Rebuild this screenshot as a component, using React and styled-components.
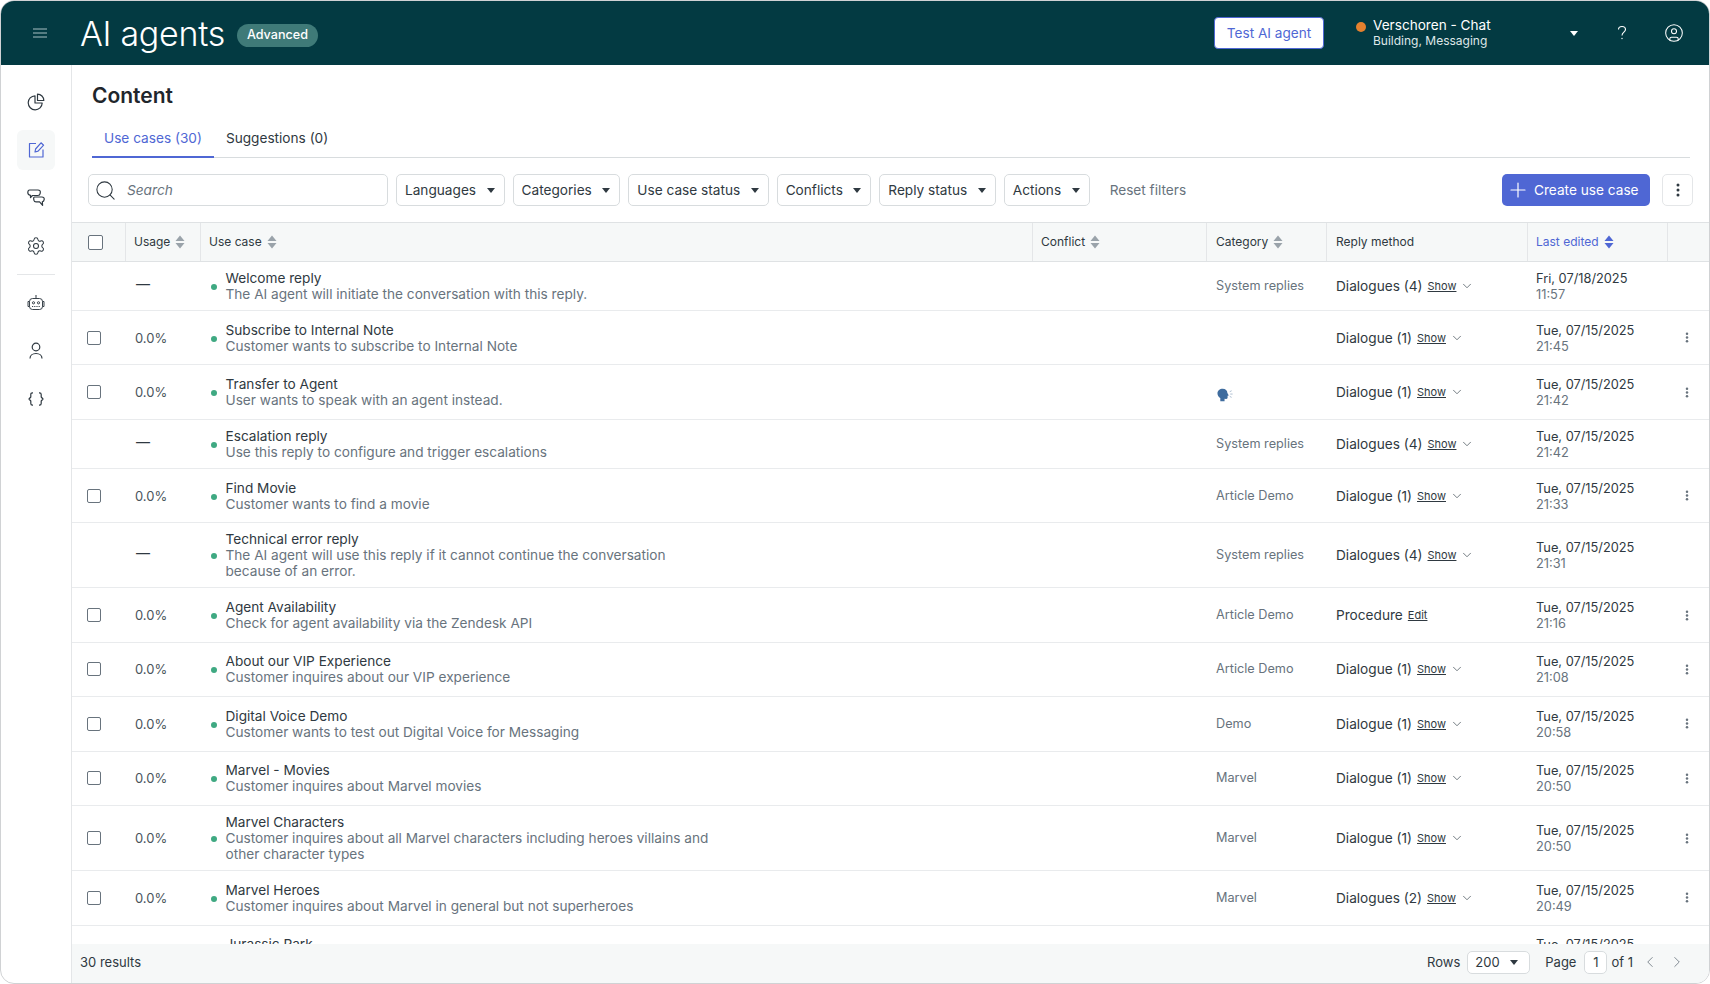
import React from 'react';
import styled, { createGlobalStyle } from 'styled-components';
import { Settings, ChevronDown, ChevronLeft, ChevronRight, Plus, Search as SearchGlyph, CircleUser } from 'lucide-react';

const Global = createGlobalStyle`
  html, body { margin: 0; padding: 0; background: #fff; }
  * { box-sizing: border-box; }
  body { font-family: Inter, "Liberation Sans", sans-serif; font-size: 13.65px; line-height: 16px; color: #2f3941; overflow: hidden; }
`;

const COLUMNS = '54px 75px 832px 174px 120px 201px 140px 1fr';

const Frame = styled.div`
  width: 1710px; height: 984px; border: 1px solid #d0d2d4; border-radius: 14px; overflow: hidden;
  display: flex; flex-direction: column; background: #fff;
`;
const TopBar = styled.header`
  height: 64px; flex: none; background: #033a42; color: #fff; display: flex; align-items: center; padding: 0 25px 0 32px;
`;
const MenuButton = styled.span`display: flex; color: #a9bfc2; margin-right: 33px;`;
const AppTitle = styled.h1`margin: 2px 0 0; font-size: 34px; line-height: 40px; font-weight: 300; letter-spacing: -0.3px;`;
const Badge = styled.span`
  margin: 4px 0 0 12px; height: 23px; padding: 0 10px; border-radius: 12px; background: #3f7a78; color: #fff;
  font-size: 12.6px; font-weight: 500; display: flex; align-items: center;
`;
const TestButton = styled.button`
  margin-left: auto; width: 110px; height: 32px; border-radius: 4px; border: 1px solid #4f67d4; background: #fff; color: #4f67d4;
  font: 400 13.6px Inter, sans-serif;
`;
const Status = styled.div`display: flex; align-items: center; margin-left: 32px; width: 222px;`;
const StatusDot = styled.span`width: 10px; height: 10px; border-radius: 50%; background: #e5812f; margin: -13px 7px 0 0;`;
const StatusText = styled.div`margin-top: -2px;`;
const StatusName = styled.div`font-size: 13.6px; line-height: 16px;`;
const StatusSub = styled.div`font-size: 12px; line-height: 15px; color: #dfe7e8;`;
const HeaderCaret = styled.span`
  width: 0; height: 0; border-left: 4.5px solid transparent; border-right: 4.5px solid transparent; border-top: 5px solid #fff; margin-left: auto;
`;
const HeaderIcon = styled.span`display: flex; margin-left: ${p => p.$gap}px; color: #fff;`;

const Body = styled.div`flex: 1; min-height: 0; display: flex;`;
const Sidebar = styled.nav`
  width: 71px; flex: none; border-right: 1px solid #e4e6e8; padding-top: 17px; display: flex; flex-direction: column; align-items: center;
`;
const NavItem = styled.span`
  width: 38px; height: 40px; margin-bottom: 8px; border-radius: 6px; display: flex; align-items: center; justify-content: center;
  color: ${p => p.$active ? '#4f67d4' : '#2f3941'}; background: ${p => p.$active ? '#f6f8f8' : 'transparent'};
`;
const NavDivider = styled.div`width: 38px; height: 1px; background: #e4e6e8; margin: 0 0 8px;`;
const Main = styled.main`flex: 1; min-width: 0; display: flex; flex-direction: column;`;
const PageHead = styled.div`padding: 17px 19px 0 20px; flex: none;`;
const PageTitle = styled.h2`margin: 0; font-size: 21px; line-height: 28px; font-weight: 600; color: #1f262c;`;
const Tabs = styled.div`display: flex; margin-top: 7px; border-bottom: 1px solid #d8dcde; height: 41px;`;
const Tab = styled.div`
  height: 40px; padding: 2px 12px 0; display: flex; align-items: center;
  color: ${p => p.$active ? '#4f67d4' : '#2f3941'}; box-shadow: ${p => p.$active ? '0 1px 0 #4f67d4, inset 0 -1px 0 #4f67d4' : 'none'};
`;
const Toolbar = styled.div`display: flex; gap: 8px; align-items: center; padding: 0 16px; margin: 16px 0; flex: none;`;
const SearchBox = styled.div`
  width: 300px; height: 32px; border: 1px solid #d8dcde; border-radius: 5px; display: flex; align-items: center; padding: 0 5px; gap: 10px;
  color: #2f3941;
`;
const SearchText = styled.span`font-style: italic; color: #68737d;`;
const Filter = styled.div`
  height: 32px; border: 1px solid #d8dcde; border-radius: 5px; padding: 0 9px 0 8px; display: flex; align-items: center; gap: 10.5px; color: #2f3941;
`;
const Caret = styled.span`
  width: 0; height: 0; border-left: 4.5px solid transparent; border-right: 4.5px solid transparent; border-top: 5px solid #2f3941;
`;
const Reset = styled.span`margin-left: 12px; color: #68737d;`;
const CreateButton = styled.div`
  margin-left: auto; width: 148px; height: 32px; border-radius: 5px; background: #4f67d4; color: #fff; display: flex; align-items: center; padding-left: 4px; gap: 4px;
`;
const KebabButton = styled.div`
  width: 31px; height: 32px; margin-left: 4px; border: 1px solid #e4e6e8; border-radius: 5px; display: flex; align-items: center; justify-content: center;
`;
const TableArea = styled.div`flex: 1; min-height: 0; overflow: hidden;`;
const HeadRow = styled.div`
  display: grid; grid-template-columns: ${COLUMNS}; height: 40px; background: #f6f8f8; border-top: 1px solid #dfe2e4; border-bottom: 1px solid #dfe2e4;
`;
const HeadCell = styled.div`
  display: flex; align-items: center; gap: 5px; padding-left: ${p => p.$pad}px; border-right: ${p => p.$last ? '0' : '1px solid #e4e6e8'};
  font-size: 12px; color: ${p => p.$active ? '#4f67d4' : '#2f3941'};
`;
const Row = styled.div`
  display: grid; grid-template-columns: ${COLUMNS}; align-items: center; padding: 8px 0; border-bottom: 1px solid #e9ebed;
`;
const CheckCell = styled.div`padding-left: 14.5px; display: flex; align-items: center; ${p => p.$show ? 'height: 37.45px;' : ''}`;
const Check = styled.span`
  display: block; width: ${p => p.$size}px; height: ${p => p.$size}px; border: 1.5px solid #68737d; border-radius: 2px; background: #fff;
`;
const UsageCell = styled.div`padding-left: 9px; font-size: 13px; color: #49545c;`;
const DashCell = styled.div`padding-left: 10px; margin-top: -4px; font-size: 14px; color: #2f3941;`;
const CaseCell = styled.div`display: flex; align-items: center; padding-left: 10px;`;
const LiveDot = styled.span`width: 6px; height: 6px; border-radius: 50%; background: #3fa982; flex: none; margin: 2px 8.5px 0 0;`;
const CaseText = styled.div`width: 486px;`;
const CaseTitle = styled.div`color: #2f3941;`;
const CaseDesc = styled.div`color: #68737d;`;
const Category = styled.div`padding-left: 9px; font-size: 12.7px; color: #68737d; grid-column: 5; display: flex; align-items: center;`;
const SpeakWrap = styled.span`display: flex; margin: 3px 0 -3px 1px;`;
const Reply = styled.div`padding-left: 9px; display: flex; align-items: center; grid-column: 6;`;
const ShowLink = styled.span`font-size: 11px; text-decoration: underline; margin-left: 5px; color: #2f3941;`;
const ChevronWrap = styled.span`display: flex; margin-left: 4px; color: #49545c;`;
const Edited = styled.div`margin: 1px 0 -1px; padding-left: 8px; grid-column: 7; font-size: 12.8px;`;
const EditedTime = styled.div`color: #68737d;`;
const RowKebab = styled.div`display: flex; padding-left: 16px; grid-column: 8;`;
const Footer = styled.footer`
  height: 39px; flex: none; background: #f6f8f8; display: flex; align-items: center; padding: 0 23px 3px 8px; color: #2f3941; font-size: 13px;
`;
const Rows = styled.span`margin-left: auto;`;
const RowSelect = styled.div`
  width: 63px; height: 23px; margin: 0 15px 0 7px; background: #fff; border: 1px solid #d8dcde; border-radius: 5px; display: flex; align-items: center; justify-content: space-between; padding: 0 11px 0 7px;
`;
const PageInput = styled.div`
  width: 23px; height: 23px; margin: 0 4px 0 8px; background: #fff; border: 1px solid #d8dcde; border-radius: 5px; display: flex; align-items: center; justify-content: center;
`;
const Pager = styled.span`display: flex; color: #68737d; margin-left: ${p => p.$gap}px;`;

const SortIcon = ({ active }) => (
  <svg width="10" height="14" viewBox="0 0 10 14" aria-hidden="true">
    <path d="M5 0.500 9.500 6h-9z" fill={active ? '#4f67d4' : '#9aa3aa'} />
    <path d="M5 13.500.5 8h9z" fill={active ? '#4f67d4' : '#9aa3aa'} />
  </svg>
);
const Dots = ({ size = 3, color = '#68737d', h = 14 }) => (
  <svg width="6" height={h} viewBox={`0 0 6 ${h}`} aria-hidden="true">
    <circle cx="3" cy={size / 2 + 0.5} r={size / 2} fill={color} />
    <circle cx="3" cy={h / 2} r={size / 2} fill={color} />
    <circle cx="3" cy={h - size / 2 - 0.5} r={size / 2} fill={color} />
  </svg>
);
const BurgerIcon = () => (
  <svg width="14" height="10" viewBox="0 0 14 10" stroke="currentColor" strokeWidth="1" aria-hidden="true">
    <path d="M0 1h14M0 5h14M0 9h14" />
  </svg>
);
const HelpGlyph = () => (
  <svg width="12" height="16" viewBox="0 0 12 16" fill="none" stroke="currentColor" strokeWidth="1.1" aria-hidden="true">
    <path d="M2.500 4.500C2.500 2.500 4 1.500 6 1.500s3.500 1.200 3.500 3c0 2.800-3.500 2.600-3.500 6" />
    <circle cx="6" cy="13.500" r="0.7" fill="currentColor" stroke="none" />
  </svg>
);
const PieIcon = () => (
  <svg width="18" height="18" viewBox="0 0 18 18" fill="none" stroke="currentColor" strokeWidth="1.2" strokeLinejoin="round" aria-hidden="true">
    <path d="M8 2.800a7 7 0 1 0 7.200 7.200H8z" />
    <path d="M10.500 1.200a6.300 6.300 0 0 1 6.300 6.300h-6.300z" />
  </svg>
);
const EditIcon = () => (
  <svg width="18" height="18" viewBox="0 0 18 18" fill="none" stroke="currentColor" strokeWidth="1.2" strokeLinejoin="round" aria-hidden="true">
    <path d="M9 2.500H2.500V16H16V8.500" />
    <path d="M8 11l.6-3 5.400-6.200 2.600 2.400-5.500 6z" />
  </svg>
);
const ChatsIcon = () => (
  <svg width="18" height="18" viewBox="0 0 18 18" fill="none" stroke="currentColor" strokeWidth="1.2" strokeLinejoin="round" aria-hidden="true">
    <path d="M2.500 1h8.500c1.600 0 2.500 1 2.300 2.400l-.2 1.300c-.2 1.200-1 1.800-2.100 1.800H5.500L3.500 8.500V6.400C1.800 6.100.7 5 .8 3.400.9 2 1.500 1 2.500 1z" />
    <path d="M7.500 8h7.500c1.400 0 2.400 1 2.200 2.400-.1 1.300-.9 2.200-1.900 2.400l.3 3.500-3-3.400H9c-1.100 0-1.900-.7-2.100-1.700l-.2-1.300C6.500 9 7 8 7.500 8z" />
  </svg>
);
const BotIcon = () => (
  <svg width="18" height="18" viewBox="0 0 18 18" fill="none" stroke="currentColor" strokeWidth="0.95" aria-hidden="true">
    <rect x="2.500" y="4.500" width="13" height="11" rx="3" />
    <path d="M9 4.500V2" />
    <circle cx="9" cy="1.600" r="0.7" fill="currentColor" stroke="none" />
    <path d="M2.500 7.500H1v5h1.500M15.500 7.500H17v5h-1.500" />
    <circle cx="6.500" cy="8.800" r="1.100" />
    <circle cx="11.500" cy="8.800" r="1.100" />
    <path d="M5 12.500h8" strokeDasharray="1.200 1" />
  </svg>
);
const PersonIcon = () => (
  <svg width="18" height="18" viewBox="0 0 18 18" fill="none" stroke="currentColor" strokeWidth="1.2" aria-hidden="true">
    <circle cx="9" cy="5" r="3.800" />
    <path d="M3 16.500c0-3 2.500-5 6-5s6 2 6 5" />
  </svg>
);
const BracesIcon = () => (
  <svg width="18" height="18" viewBox="0 0 18 18" fill="none" stroke="currentColor" strokeWidth="1.2" strokeLinejoin="round" aria-hidden="true">
    <path d="M6 2.800H5.500C4.300 2.800 3.800 3.500 3.800 4.500V7L2 9l1.800 2v2.500c0 1 .5 1.700 1.700 1.700H6" />
    <path d="M12 2.800h.5c1.200 0 1.700.7 1.700 1.700V7L16 9l-1.800 2v2.500c0 1-.5 1.700-1.700 1.700H12" />
  </svg>
);
const SpeakIcon = () => (
  <svg width="17" height="14" viewBox="0 0 18 14" aria-hidden="true">
    <path d="M6 0.500c3 0 5 2 5 4.500l1.500 2.500-1.300.4V10c0 .8-.7 1.300-1.500 1.200l-1.700-.1V13.500H3.500v-3.300C1.600 9 .5 7.200.5 5.300.5 2.600 3 .5 6 .5z" fill="#3f6c9e" />
    <path d="M13.500 3.500 15.500 2.500M14 6h2.500M13.500 8.500l2 1" stroke="#9fb4c9" strokeWidth="0.9" fill="none" />
  </svg>
);

const rows = [
  { t: 'Welcome reply', d: 'The AI agent will initiate the conversation with this reply.', c: 'System replies', r: 'Dialogues (4)', e: 'Fri, 07/18/2025', h: '11:57', sys: true },
  { t: 'Subscribe to Internal Note', d: 'Customer wants to subscribe to Internal Note', c: '', r: 'Dialogue (1)', e: 'Tue, 07/15/2025', h: '21:45' },
  { t: 'Transfer to Agent', d: 'User wants to speak with an agent instead.', speak: true, r: 'Dialogue (1)', e: 'Tue, 07/15/2025', h: '21:42' },
  { t: 'Escalation reply', d: 'Use this reply to configure and trigger escalations', c: 'System replies', r: 'Dialogues (4)', e: 'Tue, 07/15/2025', h: '21:42', sys: true },
  { t: 'Find Movie', d: 'Customer wants to find a movie', c: 'Article Demo', r: 'Dialogue (1)', e: 'Tue, 07/15/2025', h: '21:33' },
  { t: 'Technical error reply', d: 'The AI agent will use this reply if it cannot continue the conversation because of an error.', c: 'System replies', r: 'Dialogues (4)', e: 'Tue, 07/15/2025', h: '21:31', sys: true },
  { t: 'Agent Availability', d: 'Check for agent availability via the Zendesk API', c: 'Article Demo', r: 'Procedure', proc: true, e: 'Tue, 07/15/2025', h: '21:16' },
  { t: 'About our VIP Experience', d: 'Customer inquires about our VIP experience', c: 'Article Demo', r: 'Dialogue (1)', e: 'Tue, 07/15/2025', h: '21:08' },
  { t: 'Digital Voice Demo', d: 'Customer wants to test out Digital Voice for Messaging', c: 'Demo', r: 'Dialogue (1)', e: 'Tue, 07/15/2025', h: '20:58' },
  { t: 'Marvel - Movies', d: 'Customer inquires about Marvel movies', c: 'Marvel', r: 'Dialogue (1)', e: 'Tue, 07/15/2025', h: '20:50' },
  { t: 'Marvel Characters', d: 'Customer inquires about all Marvel characters including heroes villains and other character types', c: 'Marvel', r: 'Dialogue (1)', e: 'Tue, 07/15/2025', h: '20:50' },
  { t: 'Marvel Heroes', d: 'Customer inquires about Marvel in general but not superheroes', c: 'Marvel', r: 'Dialogues (2)', e: 'Tue, 07/15/2025', h: '20:49' },
  { t: 'Jurassic Park', d: 'Customer inquires about Jurassic Park', c: 'Marvel', r: 'Dialogue (1)', e: 'Tue, 07/15/2025', h: '20:47' },
];
const filters = ['Languages', 'Categories', 'Use case status', 'Conflicts', 'Reply status', 'Actions'];

export default function App() {
  return (
    <>
      <Global />
      <Frame>
        <TopBar>
          <MenuButton><BurgerIcon /></MenuButton>
          <AppTitle>AI agents</AppTitle>
          <Badge>Advanced</Badge>
          <TestButton>Test AI agent</TestButton>
          <Status>
            <StatusDot />
            <StatusText>
              <StatusName>Verschoren - Chat</StatusName>
              <StatusSub>Building, Messaging</StatusSub>
            </StatusText>
            <HeaderCaret />
          </Status>
          <HeaderIcon $gap={38}><HelpGlyph /></HeaderIcon>
          <HeaderIcon $gap={36}><CircleUser size={20} strokeWidth={1.25} /></HeaderIcon>
        </TopBar>
        <Body>
          <Sidebar>
            <NavItem><PieIcon /></NavItem>
            <NavItem $active><EditIcon /></NavItem>
            <NavItem><ChatsIcon /></NavItem>
            <NavItem><Settings size={20} strokeWidth={1.25} /></NavItem>
            <NavDivider />
            <NavItem><BotIcon /></NavItem>
            <NavItem><PersonIcon /></NavItem>
            <NavItem><BracesIcon /></NavItem>
          </Sidebar>
          <Main>
            <PageHead>
              <PageTitle>Content</PageTitle>
              <Tabs>
                <Tab $active>Use cases (30)</Tab>
                <Tab>Suggestions (0)</Tab>
              </Tabs>
            </PageHead>
            <Toolbar>
              <SearchBox>
                <SearchGlyph size={23} strokeWidth={1.1} />
                <SearchText>Search</SearchText>
              </SearchBox>
              {filters.map(f => <Filter key={f}>{f}<Caret /></Filter>)}
              <Reset>Reset filters</Reset>
              <CreateButton><Plus size={24} strokeWidth={1.2} />Create use case</CreateButton>
              <KebabButton><Dots size={3} color="#2f3941" /></KebabButton>
            </Toolbar>
            <TableArea>
              <HeadRow>
                <HeadCell $pad={16}><Check $size={15} /></HeadCell>
                <HeadCell $pad={8}>Usage <SortIcon /></HeadCell>
                <HeadCell $pad={8}>Use case <SortIcon /></HeadCell>
                <HeadCell $pad={8}>Conflict <SortIcon /></HeadCell>
                <HeadCell $pad={9}>Category <SortIcon /></HeadCell>
                <HeadCell $pad={9}>Reply method</HeadCell>
                <HeadCell $pad={8} $active>Last edited <SortIcon active /></HeadCell>
                <HeadCell $pad={8} $last />
              </HeadRow>
              {rows.map(r => (
                <Row key={r.t}>
                  <CheckCell $show={!r.sys}>{!r.sys && <Check $size={14} />}</CheckCell>
                  {r.sys ? <DashCell>—</DashCell> : <UsageCell>0.0%</UsageCell>}
                  <CaseCell>
                    <LiveDot />
                    <CaseText>
                      <CaseTitle>{r.t}</CaseTitle>
                      <CaseDesc>{r.d}</CaseDesc>
                    </CaseText>
                  </CaseCell>
                  <Category>{r.speak ? <SpeakWrap><SpeakIcon /></SpeakWrap> : r.c}</Category>
                  <Reply>
                    {r.r}
                    <ShowLink>{r.proc ? 'Edit' : 'Show'}</ShowLink>
                    {!r.proc && <ChevronWrap><ChevronDown size={14} strokeWidth={1.3} /></ChevronWrap>}
                  </Reply>
                  <Edited>
                    {r.e}
                    <EditedTime>{r.h}</EditedTime>
                  </Edited>
                  {!r.sys && <RowKebab><Dots size={2.5} h={11} /></RowKebab>}
                </Row>
              ))}
            </TableArea>
            <Footer>
              <span>30 results</span>
              <Rows>Rows</Rows>
              <RowSelect>200<Caret /></RowSelect>
              <span>Page</span>
              <PageInput>1</PageInput>
              <span>of 1</span>
              <Pager $gap={8}><ChevronLeft size={18} strokeWidth={1.1} /></Pager>
              <Pager $gap={9}><ChevronRight size={18} strokeWidth={1.1} /></Pager>
            </Footer>
          </Main>
        </Body>
      </Frame>
    </>
  );
}
